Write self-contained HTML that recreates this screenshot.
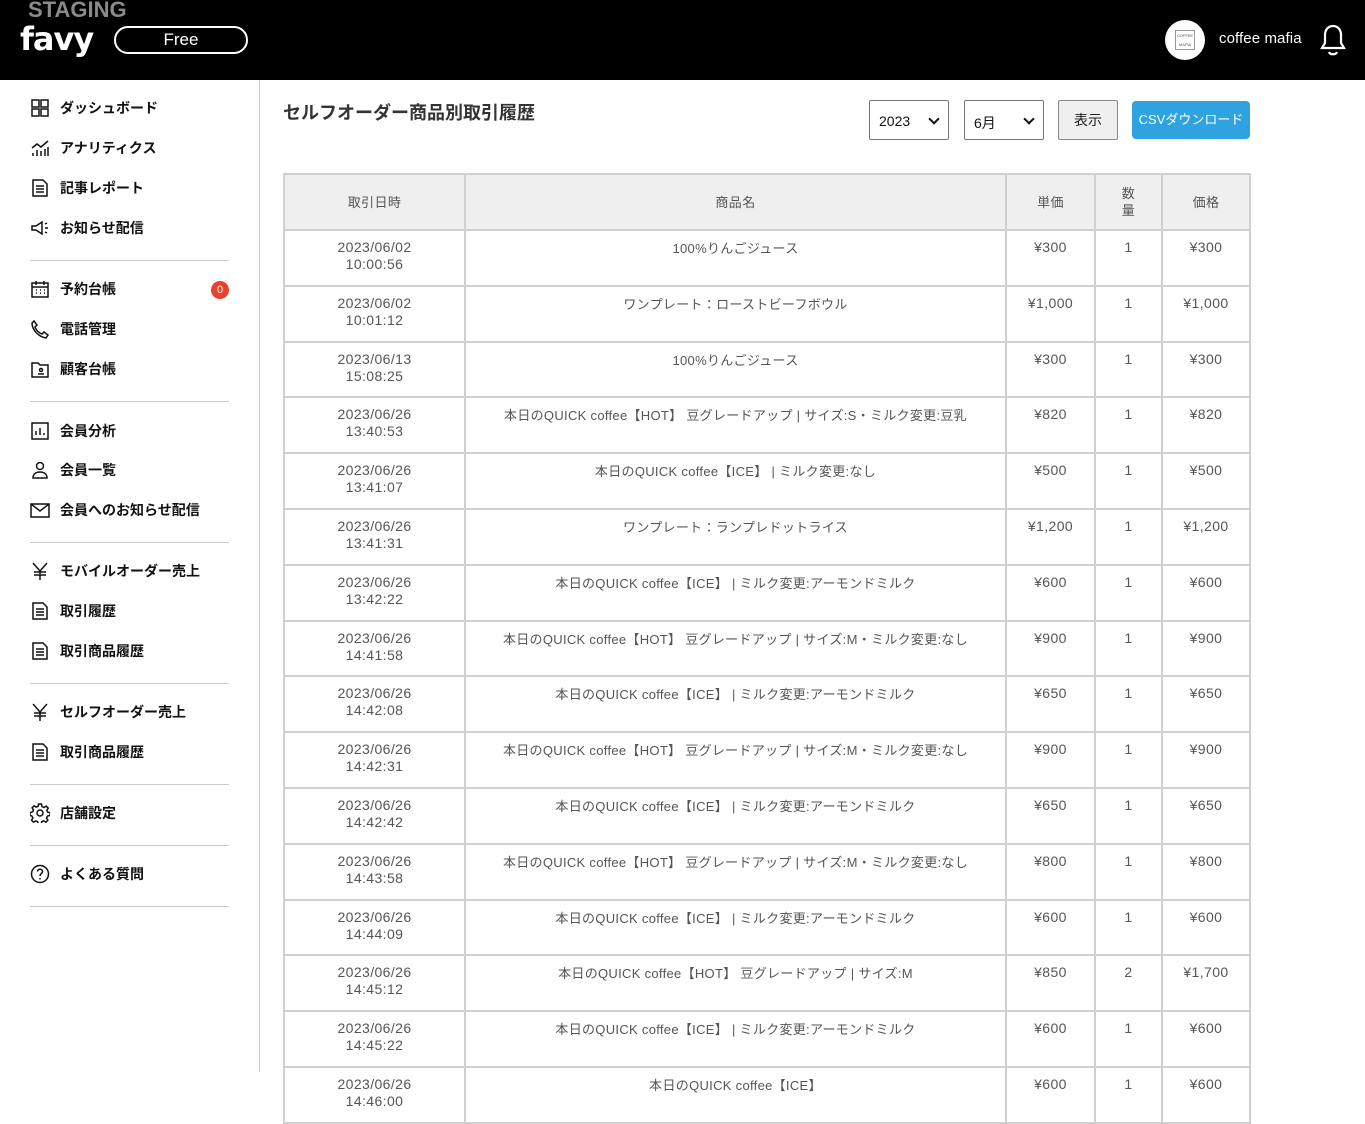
<!DOCTYPE html>
<html><head><meta charset="utf-8">
<style>
*{box-sizing:border-box;margin:0;padding:0}
body{width:1365px;height:1072px;overflow:hidden;background:#fff;font-family:"Liberation Sans","Noto Sans CJK JP",sans-serif;color:#333;position:relative}
.hdr{position:absolute;left:0;top:0;width:1365px;height:80px;background:#000}
.stg{position:absolute;left:28px;top:-3px;color:#8a8a8a;font-size:22px;font-weight:bold}
.logo{position:absolute;left:20px;top:20px;color:#fff;font-size:32px;font-weight:bold;font-family:"DejaVu Sans",sans-serif;letter-spacing:-1px}
.free{position:absolute;left:114px;top:26px;width:134px;height:28px;border:2px solid #fff;border-radius:14px;color:#fff;font-size:17px;text-align:center;line-height:24px}
.av{position:absolute;left:1165px;top:20px;width:40px;height:40px;border-radius:50%;background:#fff}
.av div{position:absolute;left:10px;top:10px;width:20px;height:20px;border:1px solid #999;font-size:4px;color:#555;text-align:center;line-height:9px}
.uname{position:absolute;left:1219px;top:30px;color:#fff;font-size:15px;letter-spacing:0.1px}
.side{position:absolute;left:0;top:80px;width:260px;height:992px;border-right:1px solid #ccc}
.it{position:absolute;left:30px;height:20px;display:flex;align-items:center;font-size:14px;font-weight:bold;color:#111}
.it svg{width:20px;height:20px;margin-right:10px;fill:none;stroke:#111;stroke-width:1.5}
.hr{position:absolute;left:30px;width:199px;height:1px;background:#ccc}
.badge{position:absolute;left:211px;width:18px;height:18px;border-radius:50%;background:#e8412c;color:#fff;font-size:11px;text-align:center;line-height:18px}
h1{position:absolute;left:283px;top:99px;font-size:18px;font-weight:bold;color:#333}
.sel{position:absolute;top:100px;height:40px;border:1px solid #777;border-radius:2px;background:#fff;font-size:14px;color:#111;padding:12px 9px}
.sel:after{content:"";position:absolute;right:10px;top:14px;width:6px;height:6px;border-right:2px solid #111;border-bottom:2px solid #111;transform:rotate(45deg)}
.btn{position:absolute;left:1058px;top:100px;width:60px;height:40px;border:1px solid #888;border-radius:2px;background:#efefef;font-size:14px;text-align:center;line-height:38px;color:#222}
.csv{position:absolute;left:1132px;top:101px;width:118px;height:38px;border-radius:4px;background:#2ea3e0;color:#fff;font-size:13px;text-align:center;line-height:38px}
table{position:absolute;left:283px;top:173px;width:966px;border-collapse:collapse;font-size:14px;color:#555;table-layout:fixed}
td,th{border:2px solid #d0d0d0;text-align:center;vertical-align:top;padding:8px 2px 0;line-height:17px;height:55.8px;letter-spacing:0.4px}
td:nth-child(2){font-size:13px;letter-spacing:0.3px;padding-top:9px}
th{background:#efefef;font-weight:normal;vertical-align:middle;padding:0 2px;height:56px;font-size:13px}
</style></head><body>
<div class="hdr">
<div class="stg">STAGING</div>
<div class="logo">favy</div>
<div class="free">Free</div>
<div class="av"><div>COFFEE<br>MAFIA</div></div>
<div class="uname">coffee mafia</div>
<svg style="position:absolute;left:1319px;top:23px" width="28" height="34" viewBox="0 0 28 34" fill="none" stroke="#fff" stroke-width="2.2"><path d="M14 3c-5 0-8 4-8 9v8l-3 5h22l-3-5v-8c0-5-3-9-8-9z"/><path d="M10 29c1 3 7 3 8 0"/></svg>
</div>
<div class="side">
<div class="it" style="top:18px"><svg viewBox="0 0 20 20"><rect x="2" y="2" width="7" height="7"/><rect x="11" y="2" width="7" height="7"/><rect x="2" y="11" width="7" height="7"/><rect x="11" y="11" width="7" height="7"/></svg>ダッシュボード</div>
<div class="it" style="top:58px"><svg viewBox="0 0 20 20"><path d="M2 10l5-4 4 3 7-6M3 18v-3M7 18v-6M11 18v-5M15 18v-7M18 18v-9"/></svg>アナリティクス</div>
<div class="it" style="top:98px"><svg viewBox="0 0 20 20"><path d="M3 2h10l4 4v12H3z M6 8h8M6 11h8M6 14h8"/></svg>記事レポート</div>
<div class="it" style="top:138px"><svg viewBox="0 0 20 20"><path d="M2 8h4l6-4v12l-6-4H2z M15 6l2-1M15 10h3M15 14l2 1"/></svg>お知らせ配信</div>
<div class="hr" style="top:180px"></div>
<div class="it" style="top:199px"><svg viewBox="0 0 20 20"><rect x="2" y="4" width="16" height="14"/><path d="M2 8h16M6 2v4M14 2v4M6 11h1M10 11h1M14 11h1M6 14h1M10 14h1M14 14h1"/></svg>予約台帳</div>
<div class="badge" style="top:201px">0</div>
<div class="it" style="top:239px"><svg viewBox="0 0 20 20"><path d="M4 2l3 4-2 2c1 3 4 6 7 7l2-2 4 3-2 3C9 18 2 11 2 4z"/></svg>電話管理</div>
<div class="it" style="top:279px"><svg viewBox="0 0 20 20"><path d="M2 4h6l2 2h8v12H2z"/><circle cx="11" cy="11" r="1.5"/><path d="M8 15h6"/></svg>顧客台帳</div>
<div class="hr" style="top:321px"></div>
<div class="it" style="top:341px"><svg viewBox="0 0 20 20"><rect x="2" y="2" width="16" height="16"/><path d="M6 14v-4M10 14v-7M14 14v-2"/></svg>会員分析</div>
<div class="it" style="top:380px"><svg viewBox="0 0 20 20"><circle cx="10" cy="6" r="3.5"/><path d="M3 18c0-4 3-6 7-6s7 2 7 6z"/></svg>会員一覧</div>
<div class="it" style="top:420px"><svg viewBox="0 0 20 20"><rect x="1" y="4" width="18" height="13"/><path d="M1 4l9 7 9-7"/></svg>会員へのお知らせ配信</div>
<div class="hr" style="top:462px"></div>
<div class="it" style="top:481px"><svg viewBox="0 0 20 20"><path d="M3 2l7 8 7-8M10 10v9M4 11h12M4 14h12"/></svg>モバイルオーダー売上</div>
<div class="it" style="top:521px"><svg viewBox="0 0 20 20"><path d="M3 2h10l4 4v12H3z M6 8h8M6 11h8M6 14h8"/></svg>取引履歴</div>
<div class="it" style="top:561px"><svg viewBox="0 0 20 20"><path d="M3 2h10l4 4v12H3z M6 8h8M6 11h8M6 14h8"/></svg>取引商品履歴</div>
<div class="hr" style="top:603px"></div>
<div class="it" style="top:622px"><svg viewBox="0 0 20 20"><path d="M3 2l7 8 7-8M10 10v9M4 11h12M4 14h12"/></svg>セルフオーダー売上</div>
<div class="it" style="top:662px"><svg viewBox="0 0 20 20"><path d="M3 2h10l4 4v12H3z M6 8h8M6 11h8M6 14h8"/></svg>取引商品履歴</div>
<div class="hr" style="top:704px"></div>
<div class="it" style="top:723px"><svg viewBox="0 0 20 20"><circle cx="10" cy="10" r="3"/><path d="M8.5 1h3l.5 2.5 2 1 2.2-1.4 2 2-1.4 2.2 1 2L20 9.5v3l-2.5.5-1 2 1.4 2.2-2 2-2.2-1.4-2 1-.5 2.5h-3l-.5-2.5-2-1-2.2 1.4-2-2 1.4-2.2-1-2L0 12.5v-3l2.5-.5 1-2L2.1 4.8l2-2 2.2 1.4 2-1z"/></svg>店舗設定</div>
<div class="hr" style="top:765px"></div>
<div class="it" style="top:784px"><svg viewBox="0 0 20 20"><circle cx="10" cy="10" r="8.5"/><path d="M7.5 7.5c0-3 5-3 5 0 0 2-2.5 2-2.5 4.5M10 14v1.5"/></svg>よくある質問</div>
<div class="hr" style="top:826px"></div>
</div>
<h1>セルフオーダー商品別取引履歴</h1>
<div class="sel" style="left:869px;width:80px">2023</div>
<div class="sel" style="left:964px;width:80px">6月</div>
<div class="btn">表示</div>
<div class="csv">CSVダウンロード</div>
<table>
<colgroup><col style="width:181px"><col style="width:541px"><col style="width:89px"><col style="width:67px"><col style="width:88px"></colgroup>
<tr><th>取引日時</th><th>商品名</th><th>単価</th><th>数<br>量</th><th>価格</th></tr>
<tr><td>2023/06/02<br>10:00:56</td><td>100%りんごジュース</td><td>¥300</td><td>1</td><td>¥300</td></tr>
<tr><td>2023/06/02<br>10:01:12</td><td>ワンプレート：ローストビーフボウル</td><td>¥1,000</td><td>1</td><td>¥1,000</td></tr>
<tr><td>2023/06/13<br>15:08:25</td><td>100%りんごジュース</td><td>¥300</td><td>1</td><td>¥300</td></tr>
<tr><td>2023/06/26<br>13:40:53</td><td>本日のQUICK coffee【HOT】 豆グレードアップ | サイズ:S・ミルク変更:豆乳</td><td>¥820</td><td>1</td><td>¥820</td></tr>
<tr><td>2023/06/26<br>13:41:07</td><td>本日のQUICK coffee【ICE】 | ミルク変更:なし</td><td>¥500</td><td>1</td><td>¥500</td></tr>
<tr><td>2023/06/26<br>13:41:31</td><td>ワンプレート：ランプレドットライス</td><td>¥1,200</td><td>1</td><td>¥1,200</td></tr>
<tr><td>2023/06/26<br>13:42:22</td><td>本日のQUICK coffee【ICE】 | ミルク変更:アーモンドミルク</td><td>¥600</td><td>1</td><td>¥600</td></tr>
<tr><td>2023/06/26<br>14:41:58</td><td>本日のQUICK coffee【HOT】 豆グレードアップ | サイズ:M・ミルク変更:なし</td><td>¥900</td><td>1</td><td>¥900</td></tr>
<tr><td>2023/06/26<br>14:42:08</td><td>本日のQUICK coffee【ICE】 | ミルク変更:アーモンドミルク</td><td>¥650</td><td>1</td><td>¥650</td></tr>
<tr><td>2023/06/26<br>14:42:31</td><td>本日のQUICK coffee【HOT】 豆グレードアップ | サイズ:M・ミルク変更:なし</td><td>¥900</td><td>1</td><td>¥900</td></tr>
<tr><td>2023/06/26<br>14:42:42</td><td>本日のQUICK coffee【ICE】 | ミルク変更:アーモンドミルク</td><td>¥650</td><td>1</td><td>¥650</td></tr>
<tr><td>2023/06/26<br>14:43:58</td><td>本日のQUICK coffee【HOT】 豆グレードアップ | サイズ:M・ミルク変更:なし</td><td>¥800</td><td>1</td><td>¥800</td></tr>
<tr><td>2023/06/26<br>14:44:09</td><td>本日のQUICK coffee【ICE】 | ミルク変更:アーモンドミルク</td><td>¥600</td><td>1</td><td>¥600</td></tr>
<tr><td>2023/06/26<br>14:45:12</td><td>本日のQUICK coffee【HOT】 豆グレードアップ | サイズ:M</td><td>¥850</td><td>2</td><td>¥1,700</td></tr>
<tr><td>2023/06/26<br>14:45:22</td><td>本日のQUICK coffee【ICE】 | ミルク変更:アーモンドミルク</td><td>¥600</td><td>1</td><td>¥600</td></tr>
<tr><td>2023/06/26<br>14:46:00</td><td>本日のQUICK coffee【ICE】</td><td>¥600</td><td>1</td><td>¥600</td></tr>
</table>
</body></html>
